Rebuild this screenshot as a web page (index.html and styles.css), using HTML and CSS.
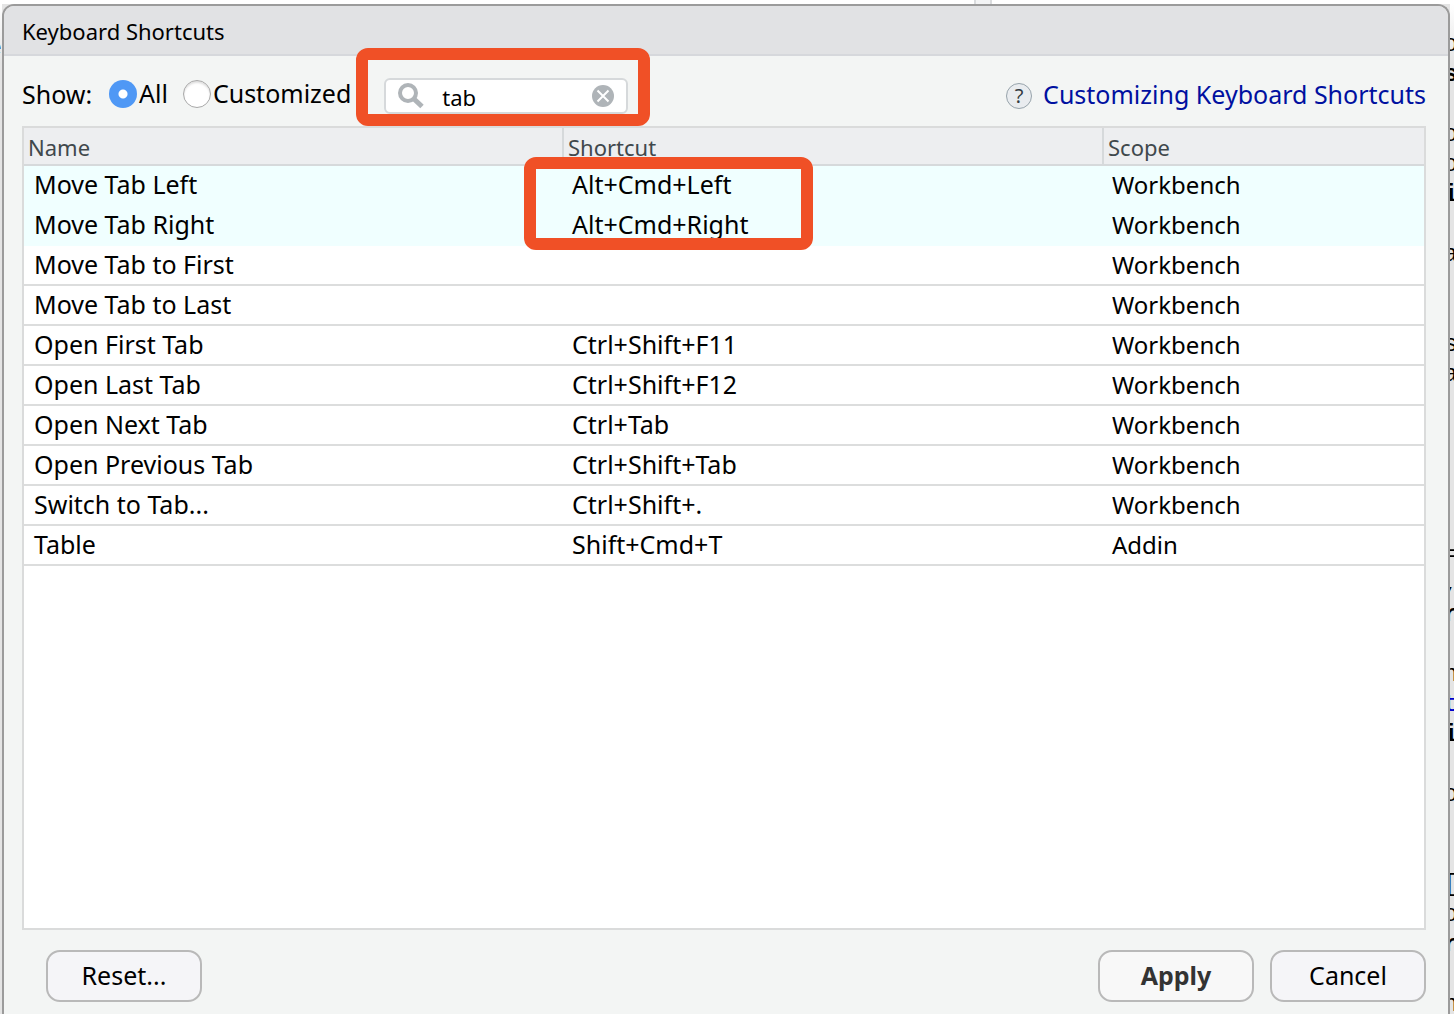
FILE: index.html
```html
<!DOCTYPE html>
<html lang="en">
<head>
<meta charset="utf-8">
<title>Keyboard Shortcuts</title>
<link rel="stylesheet" href="styles.css">
</head>
<body>
<div class="pane-edge" aria-hidden="true"></div>
<pre class="code code-left" aria-hidden="true"><code>e</code></pre>
<main class="dialog">
  <h1 class="dialog-title">Keyboard Shortcuts</h1>
  <div class="dialog-body">
    <form class="toolbar">
      <span class="show-label">Show:</span>
      <div class="choices">
        <input class="radio" type="radio" name="show" id="show-all" checked><label for="show-all">All</label>
        <input class="radio radio-second" type="radio" name="show" id="show-custom"><label for="show-custom">Customized</label>
      </div>
      <div class="search">
        <svg class="search-icon" viewBox="0 0 26 26" aria-hidden="true"><circle cx="10" cy="10" r="8" fill="none" stroke="#afb4b8" stroke-width="4"/><path d="M15.500 15.500L24 23.500" stroke="#afb4b8" stroke-width="5"/></svg>
        <input class="search-input" type="text" value="tab" aria-label="Filter shortcuts">
        <button class="clear" type="button" aria-label="Clear"><svg viewBox="0 0 22 22"><circle cx="11" cy="11" r="11" fill="#afb4b8"/><path d="M5.500 5.500L16.500 16.500M16.500 5.500L5.500 16.500" stroke="#fff" stroke-width="2"/></svg></button>
        <span class="marker marker-search"></span>
      </div>
      <span class="help-icon">?</span>
      <a class="help-link" href="#">Customizing Keyboard Shortcuts</a>
    </form>
    <section class="panel">
      <table class="shortcuts">
        <colgroup><col class="col-name"><col class="col-shortcut"><col></colgroup>
        <thead><tr><th>Name</th><th>Shortcut</th><th>Scope</th></tr></thead>
        <tbody>
          <tr class="selected"><td>Move Tab Left</td><td>Alt+Cmd+Left</td><td>Workbench</td></tr>
          <tr class="selected"><td>Move Tab Right</td><td>Alt+Cmd+Right</td><td>Workbench</td></tr>
          <tr><td>Move Tab to First</td><td></td><td>Workbench</td></tr>
          <tr><td>Move Tab to Last</td><td></td><td>Workbench</td></tr>
          <tr><td>Open First Tab</td><td>Ctrl+Shift+F11</td><td>Workbench</td></tr>
          <tr><td>Open Last Tab</td><td>Ctrl+Shift+F12</td><td>Workbench</td></tr>
          <tr><td>Open Next Tab</td><td>Ctrl+Tab</td><td>Workbench</td></tr>
          <tr><td>Open Previous Tab</td><td>Ctrl+Shift+Tab</td><td>Workbench</td></tr>
          <tr><td>Switch to Tab...</td><td>Ctrl+Shift+.</td><td>Workbench</td></tr>
          <tr><td>Table</td><td>Shift+Cmd+T</td><td>Addin</td></tr>
        </tbody>
      </table>
      <span class="marker marker-keys"></span>
    </section>
    <footer class="actions">
      <button class="button button-reset" type="button">Reset...</button>
      <button class="button button-apply" type="button">Apply</button>
      <button class="button" type="button">Cancel</button>
    </footer>
  </div>
</main>
<pre class="code code-right" aria-hidden="true"><code>o
<b>s</b>

o
o
<b>i</b>

a


s
a





=
,
<b>r</b>

n
<i>t</i>
<b>i</b>

o


[
o
<b>r</b>

n</code></pre>
</body>
</html>
```
FILE: styles.css
```css
* { box-sizing: border-box; }

body {
  margin: 0;
  height: 100vh;
  min-height: 700px;
  overflow: hidden;
  display: grid;
  grid-template-columns: 2px 1fr 4px;
  grid-template-rows: 4px 1fr;
  background: #e4e4e4;
  color: #000;
  font: 25px/32px "Noto Sans", "Open Sans", sans-serif;
}

.pane-edge {
  grid-column: 1 / -1;
  background: linear-gradient(90deg, #fff 974px, #dadcde 974px 976px, #f3f4f5 976px 990px, #dadcde 990px 992px, #fff 992px);
}

.code {
  margin: 0;
  height: 0;
  min-height: 100%;
  overflow: hidden;
  display: flex;
  justify-content: flex-end;
  padding-top: 26px;
  font: 24px/30px "Liberation Mono", monospace;
  background: linear-gradient(#fff, #e4e4e4 60px);
}

.code code { font: inherit; }

.code-left { padding-top: 30px; }

.code-right code { margin-right: -4px; }

.code i { font-style: normal; color: #00c; }

.dialog {
  display: flex;
  flex-direction: column;
  min-width: 0;
  border: 2px solid #9b9b9b;
  border-bottom: 0;
  border-radius: 12px 12px 0 0;
  background: #f3f5f4;
}

.dialog-title {
  margin: 0;
  padding: 10px 18px 8px;
  border-bottom: 2px solid #d6d8dc;
  border-radius: 10px 10px 0 0;
  background: #e1e2e4;
  font-size: 22px;
  line-height: 30px;
  font-weight: 400;
}

.dialog-body {
  flex: 1;
  display: flex;
  flex-direction: column;
  padding: 22px 22px 12px 18px;
}

.toolbar {
  display: flex;
  align-items: flex-start;
  height: 48px;
}

.show-label { width: 87px; }

.choices { display: flex; align-items: center; height: 32px; }

.choices label { padding-bottom: 2px; }

.radio {
  appearance: none;
  width: 28px;
  height: 28px;
  margin: 0 2px 0 0;
  border: 1px solid #a8a8a8;
  border-radius: 50%;
  background: #fff;
  box-shadow: inset 0 2px 2px #e0e0e0;
}

.radio:checked {
  border: 0;
  background: radial-gradient(circle, #fff 4px, #4f98f5 5px);
  box-shadow: none;
}

.radio-second { margin-left: 15px; }

.search {
  position: relative;
  display: flex;
  align-items: center;
  width: 244px;
  height: 36px;
  margin-left: 33px;
  padding: 0 12px;
  border: 2px solid #d6d9db;
  border-radius: 6px;
  background: #fff;
}

.search-icon { width: 26px; height: 26px; }

.search-input {
  flex: 1;
  min-width: 0;
  margin-left: 18px;
  padding: 2px 0 0;
  border: 0;
  outline: 0;
  background: none;
  font: 22px/28px "Noto Sans", "Open Sans", sans-serif;
}

.clear {
  width: 22px;
  height: 22px;
  padding: 0;
  border: 0;
  background: none;
}

.clear svg { display: block; }

.marker {
  position: absolute;
  border: 12px solid #f05026;
  border-radius: 12px;
  pointer-events: none;
}

.marker-search { inset: -32px -24px -14px -30px; }

.marker-keys { left: 500px; top: 29px; width: 289px; height: 93px; }

.help-icon {
  width: 26px;
  height: 26px;
  margin: 5px 11px 0 auto;
  border: 1px solid #97a3ab;
  border-radius: 50%;
  background: #e9ecef;
  color: #333c42;
  font-size: 20px;
  line-height: 24px;
  text-align: center;
}

.help-link { color: #0010a0; text-decoration: none; }

.panel {
  position: relative;
  flex: 1;
  border: 2px solid #dadbdb;
  background: #fff;
}

.shortcuts {
  width: 100%;
  table-layout: fixed;
  border-collapse: separate;
  border-spacing: 0;
}

.col-name, .col-shortcut { width: 540px; }

.shortcuts th {
  height: 38px;
  padding: 2px 4px 0;
  border-right: 2px solid #d6d9db;
  border-bottom: 2px solid #d6d9db;
  background: #edeef0;
  color: #40484c;
  font-size: 22px;
  font-weight: 400;
  text-align: left;
}

.shortcuts th:last-child { border-right: 0; }

.shortcuts td {
  height: 40px;
  padding: 0 8px 2px;
  border-bottom: 2px solid #dcdddd;
}

.shortcuts td:first-child { padding-left: 10px; }

.shortcuts td:last-child { padding-bottom: 0; font-size: 24px; }

.shortcuts .selected td { border-color: #f0ffff; background: #f0ffff; }

.actions {
  display: flex;
  gap: 16px;
  padding: 20px 0 0 24px;
}

.button {
  width: 156px;
  height: 52px;
  padding: 0 0 2px;
  border: 2px solid #b9b9b9;
  border-radius: 14px;
  background: #f5f5f8;
  color: #000;
  font: inherit;
}

.button-reset { margin-right: auto; }

.button-apply { background: #f8f8f8; color: #333; font-weight: 700; }
```
